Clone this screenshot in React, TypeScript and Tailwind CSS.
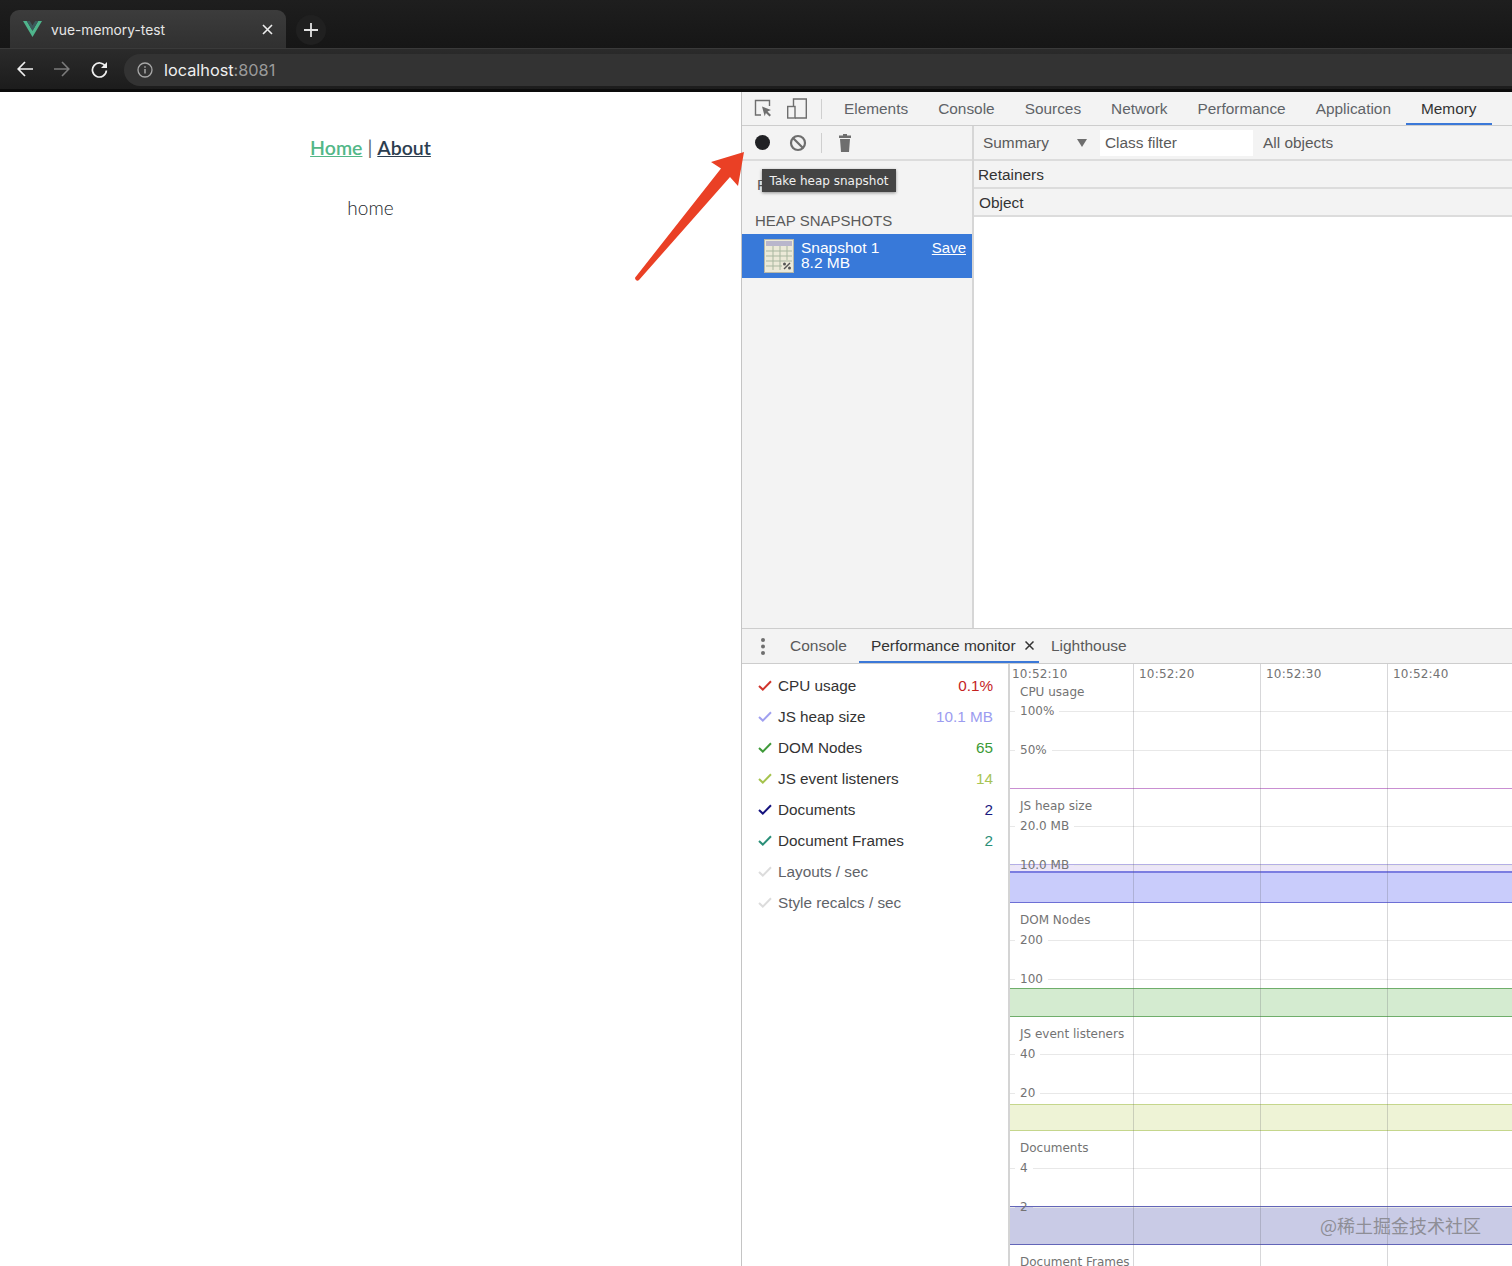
const panelTabs = [
  { name: "Elements" },
  { name: "Console" },
  { name: "Sources" },
  { name: "Network" },
  { name: "Performance" },
  { name: "Application" },
  { name: "Memory", active: true },
];

const metrics = [
  { label: "CPU usage", value: "0.1%", check: "#d0342c", text: "text-[#c5221f]" },
  { label: "JS heap size", value: "10.1 MB", check: "#a0a0f0", text: "text-[#9c9cf0]" },
  { label: "DOM Nodes", value: "65", check: "#3f9a3a", text: "text-[#3c9a36]" },
  { label: "JS event listeners", value: "14", check: "#a5c34d", text: "text-[#a8c455]" },
  { label: "Documents", value: "2", check: "#14127e", text: "text-[#1a1a80]" },
  { label: "Document Frames", value: "2", check: "#2a8f78", text: "text-[#2a8f78]" },
  { label: "Layouts / sec", value: "", check: "#dcdcdc", text: "" },
  { label: "Style recalcs / sec", value: "", check: "#dcdcdc", text: "" },
];

const chartFont = "font-['DejaVu_Sans',sans-serif] text-[12px] text-[#737373]";

function Check({ color }: { color: string }) {
  return (
    <svg width="14" height="11" viewBox="0 0 14 11" fill="none" className="-mt-[2px] shrink-0">
      <path d="M1 6l3.800 3.600L13 1.200" stroke={color} strokeWidth="2" />
    </svg>
  );
}

function Tick({ label, top }: { label: string; top: number }) {
  // line runs behind a short dash + label, same as the monitor canvas
  return (
    <div className="relative z-10 flex h-[16px] shrink-0 items-center" style={{ marginTop: top }}>
      <div className="h-px w-[5px] bg-[#e8e8e8]" />
      <span className={`px-[5px] leading-none ${chartFont}`}>{label}</span>
      <div className="h-px flex-1 bg-[#e8e8e8]" />
    </div>
  );
}

function ChartRow({
  title,
  ticks,
  band,
  children,
}: {
  title: string;
  ticks: [string, string];
  band?: string;
  children?: React.ReactNode;
}) {
  return (
    <div className="relative flex h-[114px] flex-col">
      <div className={`relative z-10 mt-[8px] h-[18px] shrink-0 pl-[10px] leading-[18px] ${chartFont}`}>{title}</div>
      <Tick label={ticks[0]} top={3} />
      <Tick label={ticks[1]} top={23} />
      <div className="absolute inset-x-0 bottom-0">{children ?? <div className={band} />}</div>
    </div>
  );
}

export default function App() {
  return (
    <div className="relative flex h-[1266px] w-[1512px] flex-col overflow-hidden bg-white font-['Liberation_Sans',sans-serif]">
      {/* browser chrome */}
      <div className="h-[92px] shrink-0 border-b-[3px] border-[#0c0c0c] bg-[#222222]">
        <div className="flex h-[48px] items-end bg-gradient-to-b from-[#1e1e1e] to-[#161616] pl-[10px]">
          <div className="flex h-[38px] w-[276px] items-center rounded-t-[9px] bg-gradient-to-b from-[#3c3c3c] to-[#303030] pl-[13px] pr-[13px]">
            <svg width="19" height="16" viewBox="0 0 19 16" className="shrink-0">
              <path d="M0 0h3.800L9.500 9.800 15.200 0H19L9.500 16z" fill="#4fb58c" />
              <path d="M3.800 0h3L9.500 4.600 12.200 0h3L9.500 9.800z" fill="#3b5a5c" />
            </svg>
            <span className="ml-[9px] flex-1 pt-[2px] font-['Inter',sans-serif] text-[13.800px] text-[#e6e6e6]">vue-memory-test</span>
            <svg width="11" height="11" viewBox="0 0 11 11" stroke="#ededed" strokeWidth="1.600">
              <path d="M1 1l9 9M10 1l-9 9" />
            </svg>
          </div>
          <div className="mb-[3px] ml-[10px] flex h-[30px] w-[30px] items-center justify-center rounded-full bg-[#202020]">
            <svg width="14" height="14" viewBox="0 0 14 14" stroke="#e2e2e2" strokeWidth="1.800">
              <path d="M7 0v14M0 7h14" />
            </svg>
          </div>
        </div>
        <div className="flex h-[41px] items-center border-t border-[#3a3a3a] bg-gradient-to-b from-[#2b2b2b] to-[#1c1c1c] pl-[17px]">
          <svg width="16" height="16" viewBox="0 0 16 16" fill="none" stroke="#f0f0f0" strokeWidth="1.700">
            <path d="M16 8H1.500M8 1L1.200 8 8 15" />
          </svg>
          <svg width="16" height="16" viewBox="0 0 16 16" fill="none" stroke="#7b7b7b" strokeWidth="1.600" className="ml-[21px]">
            <path d="M0 8h14.500M8 1l6.800 7L8 15" />
          </svg>
          <svg width="17" height="17" viewBox="0 0 17 17" fill="none" className="ml-[21px]">
            <path d="M14.500 5.500A7 7 0 1 0 15.400 9.500" stroke="#f0f0f0" strokeWidth="1.700" />
            <path d="M16 1v6h-6z" fill="#f0f0f0" />
          </svg>
          <div className="ml-[16px] mt-[1px] flex h-[32px] flex-1 items-center rounded-l-full bg-[#333333] pl-[13px] pt-[1px]">
            <svg width="16" height="16" viewBox="0 0 16 16" fill="none">
              <circle cx="8" cy="8" r="7" stroke="#a8a8a8" strokeWidth="1.300" />
              <path d="M8 7v4.500M8 4.200v1.500" stroke="#a8a8a8" strokeWidth="1.500" />
            </svg>
            <span className="ml-[11px] font-['Inter',sans-serif] text-[16.300px] text-[#f0f0f0]">
              localhost<span className="text-[#9a9a9a]">:8081</span>
            </span>
          </div>
        </div>
      </div>

      <div className="flex min-h-0 flex-1">
        {/* inspected page */}
        <div className="w-[741px] shrink-0 bg-white pt-[43px] text-center font-['Lato',sans-serif] text-[#2c3e50]">
          <div className="text-[19.500px] font-semibold leading-[26px]">
            <span className="text-[#52b788] underline">Home</span>
            <span className="font-normal text-[#5a6672]"> | </span>
            <span className="underline">About</span>
          </div>
          <div className="mt-[33px] text-[19px] font-light leading-[27px] text-[#22272c]">home</div>
        </div>

        {/* devtools */}
        <div className="flex min-w-0 flex-1 flex-col border-l border-[#c4c4c4] bg-white text-[#5a5a5a]">
          <div className="flex h-[34px] shrink-0 items-center border-b border-[#cdcdcd] bg-[#f3f3f3] pl-[12px]">
            <svg width="19" height="19" viewBox="0 0 19 19" fill="none" className="shrink-0">
              <path d="M7 16H1.500V1.500h14V7" stroke="#6e6e6e" strokeWidth="1.400" />
              <path d="M8 7.500l9 3.600-3.500 1.300 3.500 3.700-1.500 1.500-3.600-3.700-1.200 3.400z" fill="#6e6e6e" />
            </svg>
            <svg width="20" height="21" viewBox="0 0 20 21" fill="none" className="ml-[14px] shrink-0" stroke="#6e6e6e" strokeWidth="1.400">
              <path d="M6.500 8V1h12.800v19H8" />
              <rect x="0.700" y="8.500" width="7.300" height="11.500" />
            </svg>
            <div className="ml-[14px] mr-[7px] h-[20px] w-px bg-[#cfcfcf]" />
            {panelTabs.map((t) => (
              <div
                key={t.name}
                className={`flex h-full items-center px-[15px] pt-[1px] text-[15.400px] ${
                  t.active ? "border-b-2 border-[#3b78d8] pt-[3px] text-[#333333]" : "text-[#5f6368]"
                }`}
              >
                {t.name}
              </div>
            ))}
          </div>

          <div className="flex h-[502px] shrink-0">
            <div className="flex w-[230px] shrink-0 flex-col bg-[#f3f3f3]">
              <div className="flex h-[35px] shrink-0 items-center border-b-2 border-[#dcdcdc] pl-[13px]">
                <div className="h-[15px] w-[15px] rounded-full bg-[#202124]" />
                <svg width="18" height="18" viewBox="0 0 18 18" fill="none" stroke="#6e6e6e" strokeWidth="2.200" className="ml-[19px]">
                  <circle cx="9" cy="9" r="7" />
                  <path d="M4 4l10 10" />
                </svg>
                <div className="ml-[14px] h-[20px] w-px bg-[#cfcfcf]" />
                <svg width="12" height="18" viewBox="0 0 12 18" fill="#6e6e6e" className="ml-[17px]">
                  <path d="M4 0h4v1.500h4V4H0V1.500h4zM1 5h10l-1 13H2z" />
                </svg>
              </div>
              <div className="mt-[15px] pl-[15px] text-[15px] leading-[17px]">Profiles</div>
              <div className="mt-[19px] pl-[13px] text-[15px] leading-[17px]">HEAP SNAPSHOTS</div>
              <div className="mt-[5px] flex h-[44px] items-center bg-[#3879d9] pl-[22px] pr-[6px] text-[#ffffff]">
                <svg width="30" height="34" viewBox="0 0 30 34" className="shrink-0">
                  <rect x="0.500" y="0.500" width="29" height="33" fill="#ece9d8" stroke="#b8b8a8" />
                  <rect x="2" y="2" width="26" height="5" fill="#b9b6cc" />
                  <path d="M2 12h26M2 17h26M2 22h26M2 27h16M9 7v24M16 7v24M23 7v14" stroke="#a9b7a0" strokeWidth="1" />
                  <path d="M20 30l6-6" stroke="#555" strokeWidth="1.500" />
                  <circle cx="20.500" cy="25" r="1.500" fill="#555" />
                  <circle cx="25.500" cy="29" r="1.500" fill="#555" />
                </svg>
                <div className="-mt-[2px] ml-[7px] flex-1 text-[15.500px] leading-[15px]">
                  <div>Snapshot 1</div>
                  <div>8.2 MB</div>
                </div>
                <span className="-mt-[17px] text-[15px] leading-[15px] underline">Save</span>
              </div>
            </div>

            <div className="min-w-0 flex-1 border-l-2 border-[#d6d6d6]">
              <div className="flex h-[35px] items-center border-b-2 border-[#dcdcdc] bg-[#f3f3f3] pl-[9px] pt-[1px]">
                <span className="w-[94px] text-[15.400px]">Summary</span>
                <svg width="10" height="8" viewBox="0 0 10 8" fill="#6e6e6e" className="shrink-0">
                  <path d="M0 0h10L5 8z" />
                </svg>
                <div className="ml-[13px] flex h-[26px] w-[153px] items-center bg-white pl-[5px] text-[15.400px]">Class filter</div>
                <span className="ml-[10px] text-[15.400px]">All objects</span>
              </div>
              <div className="flex h-[28px] items-center border-b-2 border-[#dcdcdc] bg-[#f3f3f3] pl-[4px] pt-[1px] text-[15.400px] text-[#333333]">
                Retainers
              </div>
              <div className="flex h-[28px] items-center border-b-2 border-[#dcdcdc] bg-[#f3f3f3] pl-[5px] pt-[1px] text-[15.400px] text-[#333333]">
                Object
              </div>
            </div>
          </div>

          {/* drawer */}
          <div className="flex h-[36px] shrink-0 items-center border-y border-[#cdcdcd] bg-[#f3f3f3]">
            <svg width="4" height="17" viewBox="0 0 4 17" fill="#6e6e6e" className="ml-[19px]">
              <circle cx="2" cy="2" r="2" />
              <circle cx="2" cy="8.500" r="2" />
              <circle cx="2" cy="15" r="2" />
            </svg>
            <span className="ml-[25px] text-[15.500px]">Console</span>
            <div className="ml-[12px] flex h-full w-[180px] items-center border-b-2 border-[#3b78d8] pl-[12px] pt-[1px] text-[#333333]">
              <span className="text-[15.500px]">Performance monitor</span>
              <svg width="9" height="9" viewBox="0 0 9 9" stroke="#333" strokeWidth="1.500" className="ml-[9px]">
                <path d="M0.500 0.500l8 8M8.500 0.500l-8 8" />
              </svg>
            </div>
            <span className="ml-[12px] text-[15.500px]">Lighthouse</span>
          </div>

          <div className="flex min-h-0 flex-1">
            <div className="w-[266px] shrink-0 pl-[16px] pr-[15px] pt-[7px]">
              {metrics.map((m) => (
                <div key={m.label} className="flex h-[31px] items-center text-[15.300px] text-[#333333]">
                  <Check color={m.check} />
                  <span className={`ml-[6px] flex-1 ${m.value ? "" : "text-[#5f6368]"}`}>{m.label}</span>
                  <span className={m.text}>{m.value}</span>
                </div>
              ))}
            </div>

            <div className="relative min-w-0 flex-1 border-l-2 border-[#d4d4d4]">
              <div className="flex h-[20px] items-center pl-[2px] tracking-[0.2px]">
                {["10:52:10", "10:52:20", "10:52:30", "10:52:40"].map((t) => (
                  <span key={t} className={`w-[127px] shrink-0 leading-none ${chartFont}`}>
                    {t}
                  </span>
                ))}
              </div>
              <div className="flex h-[105px] flex-col border-b border-[#c98fd2]">
                <div className={`h-[18px] shrink-0 pl-[10px] leading-[16px] ${chartFont}`}>CPU usage</div>
                <Tick label="100%" top={1} />
                <Tick label="50%" top={23} />
              </div>
              <ChartRow title="JS heap size" ticks={["20.0 MB", "10.0 MB"]}>
                <div className="h-[7px] border-t border-[#b4aee6] bg-[#ece6f8]" />
                <div className="h-[32px] border-t-2 border-b border-t-[#7b7de0] border-b-[#6d6fd5] bg-[#c9ccfb]" />
              </ChartRow>
              <ChartRow title="DOM Nodes" ticks={["200", "100"]} band="h-[29px] border-y border-[#6fae6b] bg-[#d4ebd0]" />
              <ChartRow title="JS event listeners" ticks={["40", "20"]} band="h-[27px] border-y border-[#c5d68c] bg-[#eef3d6]" />
              <ChartRow title="Documents" ticks={["4", "2"]} band="h-[39px] border-y border-[#6265b8] bg-[#c9cbe6]" />
              <div className={`mt-[8px] pl-[10px] ${chartFont}`}>Document Frames</div>
              {/* timeline grid sits over the rows */}
              <div className="pointer-events-none absolute inset-0 z-20 flex pl-[123px]">
                <div className="h-full w-[127px] shrink-0 border-l border-[#606068]/25" />
                <div className="h-full w-[127px] shrink-0 border-l border-[#606068]/25" />
                <div className="h-full w-[127px] shrink-0 border-l border-[#606068]/25" />
              </div>
            </div>
          </div>
        </div>
      </div>

      {/* annotation + tooltip + watermark sit on top of the screenshot */}
      <svg width="120" height="140" viewBox="0 0 120 140" className="absolute left-[630px] top-[145px] z-30">
        <path d="M114 7L81 17l10 6.500L6 131.500a2 2 0 0 0 3 3.500L100 32l8 9z" fill="#ea4025" />
      </svg>
      <div className="absolute left-[762px] top-[169px] z-30 flex h-[23px] w-[134px] items-center justify-center bg-[#444444] font-['DejaVu_Sans',sans-serif] text-[12px] text-[#f0f0f0] shadow-[0_1px_3px_rgba(0,0,0,0.4)]">
        Take heap snapshot
      </div>
      <div className="absolute left-[1320px] top-[1213px] z-30 font-['Noto_Sans_CJK_SC',sans-serif] text-[18px] leading-[24px] text-[#8e8e96]">
        @稀土掘金技术社区
      </div>
    </div>
  );
}
